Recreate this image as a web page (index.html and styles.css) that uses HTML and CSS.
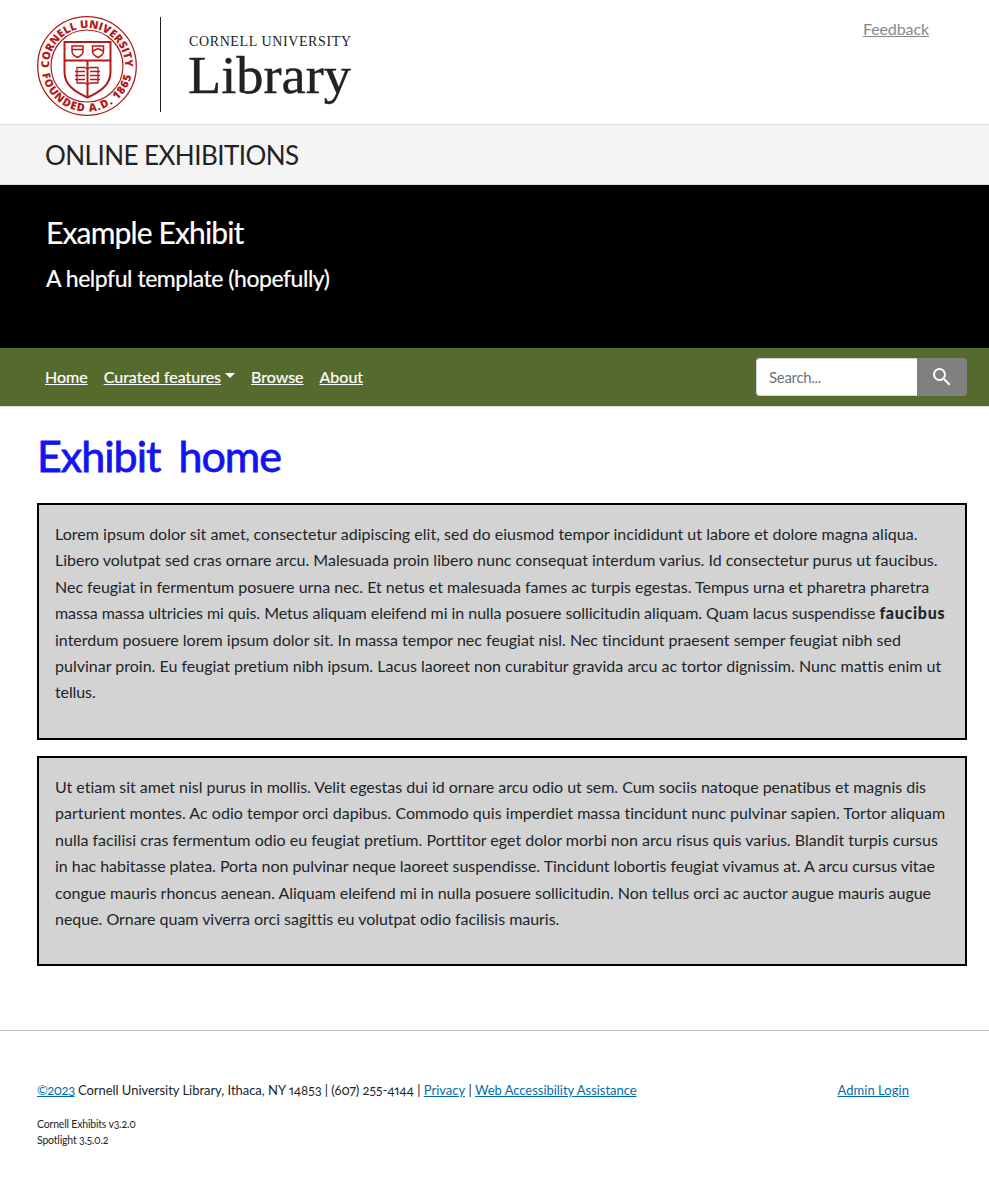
FILE: index.html
```html
<!DOCTYPE html>
<html lang="en">
<head>
<meta charset="utf-8">
<title>Example Exhibit</title>
<link rel="stylesheet" href="styles.css">
</head>
<body>
<header class="masthead">
  <svg class="logo" width="330" height="124" viewBox="0 0 330 124" role="img" aria-label="Cornell University Library">
    <defs>
      <path id="arc-top" d="M12.050 68A38 38 0 1 1 87.950 68"/>
      <path id="arc-bottom" d="M5.200 74A45.500 45.500 0 0 0 94.800 74"/>
    </defs>
    <g fill="none" stroke="#b31b1b">
      <circle cx="50" cy="66" r="49.3" stroke-width="1.3"/>
      <circle cx="50" cy="66" r="36" stroke-width="1.2"/>
      <path d="M27.500 42H73.500V72C73.500 85 63 92 50.500 97.500C38 92 27.500 85 27.500 72Z" stroke-width="2"/>
      <path d="M27.500 60.500H73.500M50.500 60.500V97" stroke-width="2"/>
      <path d="M35 46H46V51.500C46 54.500 43.500 56 40.500 57.500C37.500 56 35 54.500 35 51.500ZM35 49.500H46M55.500 46H66.500V51.500C66.500 54.500 64 56 61 57.500C58 56 55.500 54.500 55.500 51.500ZM56 51L61 48.500L66 51" stroke-width="1.500"/>
      <path d="M40 67.500H48L50.500 69L53 67.500H61V83H53L50.500 84.500L48 83H40ZM38 71.500H48M38 75.500H48M38 79.500H48M53 71.500H63M53 75.500H63M53 79.500H63" stroke-width="1.300"/>
    </g>
    <g class="seal-text">
      <text><textPath href="#arc-top" textLength="122">CORNELL UNIVERSITY</textPath></text>
      <text><textPath href="#arc-bottom" textLength="125">FOUNDED A.D. 1865</textPath></text>
    </g>
    <path d="M123.500 17V112" stroke="#222"/>
    <text class="logo-small" x="152" y="46" textLength="162">CORNELL UNIVERSITY</text>
    <text class="logo-large" x="151" y="93" textLength="163" lengthAdjust="spacingAndGlyphs">Library</text>
  </svg>
  <a class="feedback" href="#">Feedback</a>
</header>
<div class="site-bar">ONLINE EXHIBITIONS</div>
<section class="exhibit-banner">
  <h1>Example Exhibit</h1>
  <p>A helpful template (hopefully)</p>
</section>
<nav class="exhibit-nav">
  <a href="#">Home</a>
  <a class="dropdown" href="#">Curated features</a>
  <a href="#">Browse</a>
  <a href="#">About</a>
  <form class="search">
    <input type="text" placeholder="Search..." aria-label="Search">
    <button type="button" aria-label="Search"><svg width="24" height="24" viewBox="0 0 24 24" fill="#fff"><path d="M15.500 14h-.79l-.28-.27A6.471 6.471 0 0 0 16 9.500 6.500 6.500 0 1 0 9.500 16c1.610 0 3.090-.59 4.230-1.570l.27.28v.79l5 4.990L20.490 19l-4.990-5zm-6 0C7.010 14 5 11.990 5 9.500S7.010 5 9.500 5 14 7.010 14 9.500 11.990 14 9.500 14z"/></svg></button>
  </form>
</nav>
<main>
  <h2>Exhibit home</h2>
  <section class="text-block first">
    <span>Lorem ipsum dolor sit amet, consectetur adipiscing elit, sed do eiusmod tempor incididunt ut labore et dolore magna aliqua.</span>
    <span>Libero volutpat sed cras ornare arcu. Malesuada proin libero nunc consequat interdum varius. Id consectetur purus ut faucibus.</span>
    <span>Nec feugiat in fermentum posuere urna nec. Et netus et malesuada fames ac turpis egestas. Tempus urna et pharetra pharetra</span>
    <span>massa massa ultricies mi quis. Metus aliquam eleifend mi in nulla posuere sollicitudin aliquam. Quam lacus suspendisse <b>faucibus</b></span>
    <span>interdum posuere lorem ipsum dolor sit. In massa tempor nec feugiat nisl. Nec tincidunt praesent semper feugiat nibh sed</span>
    <span>pulvinar proin. Eu feugiat pretium nibh ipsum. Lacus laoreet non curabitur gravida arcu ac tortor dignissim. Nunc mattis enim ut</span>
    <span>tellus.</span>
  </section>
  <section class="text-block second">
    <span>Ut etiam sit amet nisl purus in mollis. Velit egestas dui id ornare arcu odio ut sem. Cum sociis natoque penatibus et magnis dis</span>
    <span>parturient montes. Ac odio tempor orci dapibus. Commodo quis imperdiet massa tincidunt nunc pulvinar sapien. Tortor aliquam</span>
    <span>nulla facilisi cras fermentum odio eu feugiat pretium. Porttitor eget dolor morbi non arcu risus quis varius. Blandit turpis cursus</span>
    <span>in hac habitasse platea. Porta non pulvinar neque laoreet suspendisse. Tincidunt lobortis feugiat vivamus at. A arcu cursus vitae</span>
    <span>congue mauris rhoncus aenean. Aliquam eleifend mi in nulla posuere sollicitudin. Non tellus orci ac auctor augue mauris augue</span>
    <span>neque. Ornare quam viverra orci sagittis eu volutpat odio facilisis mauris.</span>
  </section>
</main>
<footer>
  <div class="footer-row">
    <p><a class="copyright" href="#">©2023</a> <span class="address">Cornell University Library, Ithaca, NY 14853 | (607) 255-4144 |</span> <a href="#">Privacy</a> | <a href="#">Web Accessibility Assistance</a></p>
    <a class="login" href="#">Admin Login</a>
  </div>
  <p class="versions">Cornell Exhibits v3.2.0<br>Spotlight 3.5.0.2</p>
</footer>
</body>
</html>
```

FILE: styles.css
```css
* { box-sizing: border-box; }
body { margin: 0; background: #fff; color: #212529; font: 16px/26.4px Lato, sans-serif; font-variant-ligatures: none; font-variant-numeric: oldstyle-nums proportional-nums; }
h1, h2, p { margin: 0; font-weight: 400; }

.masthead { height: 124px; padding-left: 37px; display: flex; justify-content: space-between; }
.logo { display: block; }
.seal-text { fill: #b31b1b; font: 800 11px "Open Sans", sans-serif; }
.logo-small { fill: #222; font: 14px "Liberation Serif", serif; }
.logo-large { fill: #222; stroke: #222; stroke-width: .4px; font: 52px "Liberation Serif", serif; }
.feedback { margin: 16px 60px 0 0; color: #888; letter-spacing: -.1px; }

.site-bar { height: 61px; padding: 1px 45px 0; background: #f4f4f4; border-top: 1px solid #ddd; border-bottom: 1px solid #ddd; color: #222; font-size: 26px; line-height: 59px; letter-spacing: -.54px; }
.exhibit-banner { height: 163px; padding: 27px 46px; background: #000; color: #fff; }
.exhibit-banner h1 { font-size: 30px; line-height: 40px; letter-spacing: -.85px; -webkit-text-stroke: .2px #fff; }
.exhibit-banner p { margin-top: 10px; font-size: 23px; line-height: 32px; letter-spacing: -.46px; -webkit-text-stroke: .2px #fff; }

.exhibit-nav { height: 59px; padding: 0 22px 0 45px; display: flex; align-items: center; gap: 16px; background: #556b2d; border-bottom: 1px solid #ddd; }
.exhibit-nav a { color: #fff; -webkit-text-stroke: .2px #fff; }
.dropdown::after { content: ""; display: inline-block; margin-left: 4px; border: 5px solid transparent; border-top-color: #fff; border-bottom: 0; vertical-align: 5px; }
.search { margin-left: auto; display: flex; width: 211px; height: 38px; }
.search input { width: 161px; min-width: 0; border: 1px solid #ced4da; border-right: 0; border-radius: 4px 0 0 4px; padding: 0 12px; font: 15px Lato, sans-serif; letter-spacing: -.3px; }
.search input::placeholder { color: #6c757d; opacity: 1; }
.search button { width: 50px; padding: 0; border: 0; border-radius: 0 4px 4px 0; background: #808080; display: grid; place-items: center; }

main { padding: 19px 22px 0 37px; }
h2 { height: 77px; color: #1414f0; font-size: 43px; line-height: 60px; letter-spacing: -1px; word-spacing: 8px; -webkit-text-stroke: .8px #1414f0; }
.text-block { padding: 16px; background: #d3d3d3; border: 2px solid #000; white-space: nowrap; }
.text-block > span { display: table; }
.text-block b { font-weight: 900; letter-spacing: .7px; }
.first { height: 237px; }
.second { height: 210px; margin-top: 16px; }

.first > :nth-child(1) { letter-spacing: .026px; }
.first > :nth-child(3) { letter-spacing: -.008px; }
.first > :nth-child(4) { letter-spacing: -.05px; }
.first > :nth-child(6) { letter-spacing: .007px; }
.first > :nth-child(7) { letter-spacing: -.1px; }
.second > :nth-child(1) { letter-spacing: -.028px; }
.second > :nth-child(2) { letter-spacing: .04px; }
.second > :nth-child(3) { letter-spacing: .015px; }
.second > :nth-child(4) { letter-spacing: -.037px; }
.second > :nth-child(5) { letter-spacing: -.027px; }
.second > :nth-child(6) { letter-spacing: -.028px; }

footer { margin-top: 64px; border-top: 1px solid #bbb; padding: 46px 37px; font-size: 13px; }
.footer-row { display: flex; justify-content: space-between; }
footer a { color: #006eb0; letter-spacing: -.03px; }
footer .copyright { letter-spacing: -.5px; }
.address { letter-spacing: -.035px; }
footer .login { margin-right: 43px; letter-spacing: .05px; }
.versions { margin-top: 13px; font-size: 10.5px; line-height: 16px; letter-spacing: -.18px; }
```
